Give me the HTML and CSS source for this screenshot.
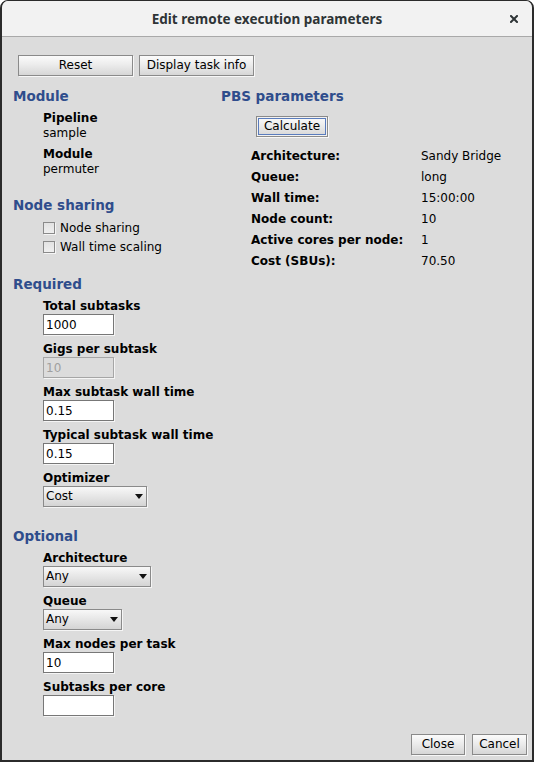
FILE: index.html
```html
<!DOCTYPE html>
<html>
<head>
<meta charset="utf-8">
<title>Edit remote execution parameters</title>
<link rel="stylesheet" href="styles.css">
</head>
<body>
<div class="window">
  <header class="titlebar">
    <span class="title">Edit remote execution parameters</span>
    <span class="close-x"><svg width="8" height="8" viewBox="0 0 8 8"><path d="M1 1 L7 7 M7 1 L1 7" stroke="#2e3436" stroke-width="2" stroke-linecap="square"/></svg></span>
  </header>
  <main class="content">
    <div class="toolbar">
      <button class="btn btn-top">Reset</button>
      <button class="btn btn-top">Display task info</button>
    </div>
    <div class="columns">
      <div class="col-left">
        <section class="group">
          <h2 class="heading">Module</h2>
          <div class="fields">
            <div class="kv"><div class="lbl">Pipeline</div><div class="val">sample</div></div>
            <div class="kv"><div class="lbl">Module</div><div class="val">permuter</div></div>
          </div>
        </section>
        <section class="group">
          <h2 class="heading">Node sharing</h2>
          <div class="checks">
            <div class="check-row"><span class="check"></span><span class="check-label">Node sharing</span></div>
            <div class="check-row"><span class="check"></span><span class="check-label">Wall time scaling</span></div>
          </div>
        </section>
        <section class="group">
          <h2 class="heading">Required</h2>
          <div class="fields">
            <div class="field"><div class="lbl">Total subtasks</div><input class="text" type="text" value="1000"></div>
            <div class="field"><div class="lbl">Gigs per subtask</div><input class="text" type="text" value="10" disabled></div>
            <div class="field"><div class="lbl">Max subtask wall time</div><input class="text" type="text" value="0.15"></div>
            <div class="field"><div class="lbl">Typical subtask wall time</div><input class="text" type="text" value="0.15"></div>
            <div class="field"><div class="lbl">Optimizer</div><div class="combo combo-opt"><span>Cost</span><span class="arrow"></span></div></div>
          </div>
        </section>
        <section class="group group-optional">
          <h2 class="heading">Optional</h2>
          <div class="fields">
            <div class="field"><div class="lbl">Architecture</div><div class="combo combo-arch"><span>Any</span><span class="arrow"></span></div></div>
            <div class="field"><div class="lbl">Queue</div><div class="combo combo-queue"><span>Any</span><span class="arrow"></span></div></div>
            <div class="field"><div class="lbl">Max nodes per task</div><input class="text" type="text" value="10"></div>
            <div class="field"><div class="lbl">Subtasks per core</div><input class="text" type="text" value=""></div>
          </div>
        </section>
      </div>
      <div class="col-right">
        <h2 class="heading">PBS parameters</h2>
        <button class="btn btn-calc">Calculate</button>
        <div class="pbs">
          <div class="pbs-lbl">Architecture:</div><div class="pbs-val">Sandy Bridge</div>
          <div class="pbs-lbl">Queue:</div><div class="pbs-val">long</div>
          <div class="pbs-lbl">Wall time:</div><div class="pbs-val">15:00:00</div>
          <div class="pbs-lbl">Node count:</div><div class="pbs-val">10</div>
          <div class="pbs-lbl">Active cores per node:</div><div class="pbs-val">1</div>
          <div class="pbs-lbl">Cost (SBUs):</div><div class="pbs-val">70.50</div>
        </div>
      </div>
    </div>
    <footer class="footer">
      <button class="btn btn-close">Close</button>
      <button class="btn btn-cancel">Cancel</button>
    </footer>
  </main>
</div>
</body>
</html>
```
FILE: styles.css
```css
html, body {
  margin: 0;
  padding: 0;
  background: #ffffff;
}
body {
  font-family: "DejaVu Sans", sans-serif;
  font-size: 12px;
  color: #000;
}
.window {
  width: 534px;
  height: 762px;
  box-sizing: border-box;
  border-style: solid;
  border-color: #2b2b2b;
  border-width: 1px 2px 2px 2px;
  border-radius: 8px 8px 0 0;
  background: #dcdcdc;
  display: flex;
  flex-direction: column;
  overflow: hidden;
}
.titlebar {
  height: 35px;
  flex: none;
  background: #f2f2f2;
  border-bottom: 1px solid #a9a9a9;
  display: flex;
  align-items: center;
  justify-content: center;
  position: relative;
}
.title {
  font-family: "Noto Sans", sans-serif;
  font-weight: bold;
  font-size: 13.5px;
  color: #2e3436;
  margin-top: 1px;
}
.close-x {
  position: absolute;
  right: 14px;
  top: 14px;
  width: 8px;
  height: 8px;
  display: flex;
}
.content {
  flex: 1;
  display: flex;
  flex-direction: column;
}
.toolbar {
  display: flex;
  gap: 6px;
  padding: 18px 0 0 16px;
}
.btn {
  font-family: "DejaVu Sans", sans-serif;
  font-size: 12px;
  color: #000;
  height: 21px;
  box-sizing: border-box;
  padding: 0;
  border: 1px solid #8a8a8a;
  background: linear-gradient(to bottom, #fbfbfb 0%, #ececec 45%, #d6d6d6 100%);
  box-shadow: 1px 1px 0 #f7f7f7;
  line-height: 19px;
  text-align: center;
}
.btn-top {
  width: 115px;
}
.columns {
  display: flex;
  margin-top: 12px;
}
.col-left {
  width: 219px;
  box-sizing: border-box;
  padding-left: 11px;
  display: flex;
  flex-direction: column;
  gap: 20px;
}
.group-optional {
  margin-top: 1px;
}
.heading {
  margin: 0;
  font-size: 13.5px;
  line-height: 17px;
  font-weight: bold;
  color: #2f4d8c;
}
.fields {
  display: flex;
  flex-direction: column;
  gap: 6px;
  margin: 6px 0 0 30px;
}
.group .fields .field + .field {
  margin-top: 1px;
}
.lbl {
  font-weight: bold;
  line-height: 15px;
}
.val {
  line-height: 15px;
}
.checks {
  margin: 4px 0 0 30px;
  display: flex;
  flex-direction: column;
}
.check-row {
  height: 19px;
  display: flex;
  align-items: center;
  gap: 5px;
}
.check {
  width: 12px;
  height: 12px;
  box-sizing: border-box;
  border: 1px solid #8a8a8a;
  background: linear-gradient(to bottom, #e2e2e2, #efefef);
  box-shadow: 1px 1px 0 #f5f5f5;
}
.check-label {
  line-height: 15px;
  padding-top: 2px;
}
.text {
  display: block;
  width: 71px;
  height: 21px;
  box-sizing: border-box;
  margin: 0;
  border: 1px solid #777;
  background: #fff;
  box-shadow: 1px 1px 0 #f5f5f5;
  padding: 0 2px;
  font-family: "DejaVu Sans", sans-serif;
  font-size: 12px;
  color: #000;
  outline: none;
}
.text:disabled {
  background: #dcdcdc;
  border-color: #a6a6a6;
  color: #a0a0a0;
}
.combo {
  height: 21px;
  box-sizing: border-box;
  border: 1px solid #8a8a8a;
  background: linear-gradient(to bottom, #f8f8f8 0%, #e6e6e6 50%, #d4d4d4 100%);
  box-shadow: 1px 1px 0 #f5f5f5;
  display: flex;
  align-items: center;
  justify-content: space-between;
  padding: 0 3px 0 2px;
  line-height: 15px;
}
.combo-opt { width: 104px; }
.combo-arch { width: 108px; }
.combo-queue { width: 79px; }
.arrow {
  width: 0;
  height: 0;
  border-left: 4.5px solid transparent;
  border-right: 4.5px solid transparent;
  border-top: 5px solid #111;
}
.col-right {
  display: flex;
  flex-direction: column;
  align-items: flex-start;
}
.btn-calc {
  width: 72px;
  margin: 11px 0 0 35px;
  box-shadow: inset 0 0 0 1px #f2f2f2, inset 0 0 0 2px #5a7cbd, 1px 1px 0 #f7f7f7;
}
.pbs {
  display: grid;
  grid-template-columns: 170px auto;
  grid-auto-rows: 21px;
  line-height: 21px;
  margin: 9px 0 0 30px;
}
.pbs-lbl {
  font-weight: bold;
}
.footer {
  margin-top: auto;
  display: flex;
  justify-content: flex-end;
  gap: 7px;
  padding: 0 5px 5px 0;
}
.btn-close { width: 54px; }
.btn-cancel { width: 55px; }
```
